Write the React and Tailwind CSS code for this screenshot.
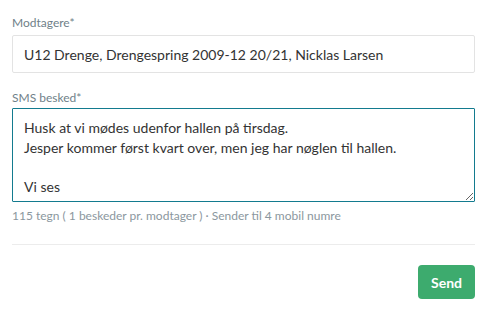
import React from 'react';

const App = () => {
  return (
    <div className="w-[489px] h-[312px] bg-white pl-3 pr-[14px] pt-[14px] font-['Lato','Noto_Sans',sans-serif]">
      <label className="block text-[12px] leading-[18px] text-[#6f7f89]">Modtagere*</label>
      <div className="mt-[3px] h-[38px] border border-[#e3e3e3] rounded-[2px] px-[11px] flex items-center text-[14px] text-[#333]">
        U12 Drenge, Drengespring 2009-12 20/21, Nicklas Larsen
      </div>

      <label className="block mt-[16px] text-[12px] leading-[18px] text-[#6f7f89]">SMS besked*</label>
      <textarea
        className="mt-[1px] block w-full h-[94px] border border-[#137b8f] rounded-[1px] px-[11px] pt-[9px] text-[14px] leading-[19.5px] text-[#333] outline-none resize-y"
        defaultValue={'Husk at vi mødes udenfor hallen på tirsdag.\nJesper kommer først kvart over, men jeg har nøglen til hallen.\n\nVi ses'}
      />
      <p className="mt-[6px] text-[12px] leading-[16px] text-[#8b979e]">
        115 tegn ( 1 beskeder pr. modtager ) · Sender til 4 mobil numre
      </p>

      <div className="mt-[20px] border-t border-[#ececec]" />

      <div className="mt-[20px] flex justify-end">
        <button className="h-[34px] w-[57px] rounded-[4px] bg-[#3dab6e] text-white text-[14px] font-bold">
          Send
        </button>
      </div>
    </div>
  );
};

export default App;
